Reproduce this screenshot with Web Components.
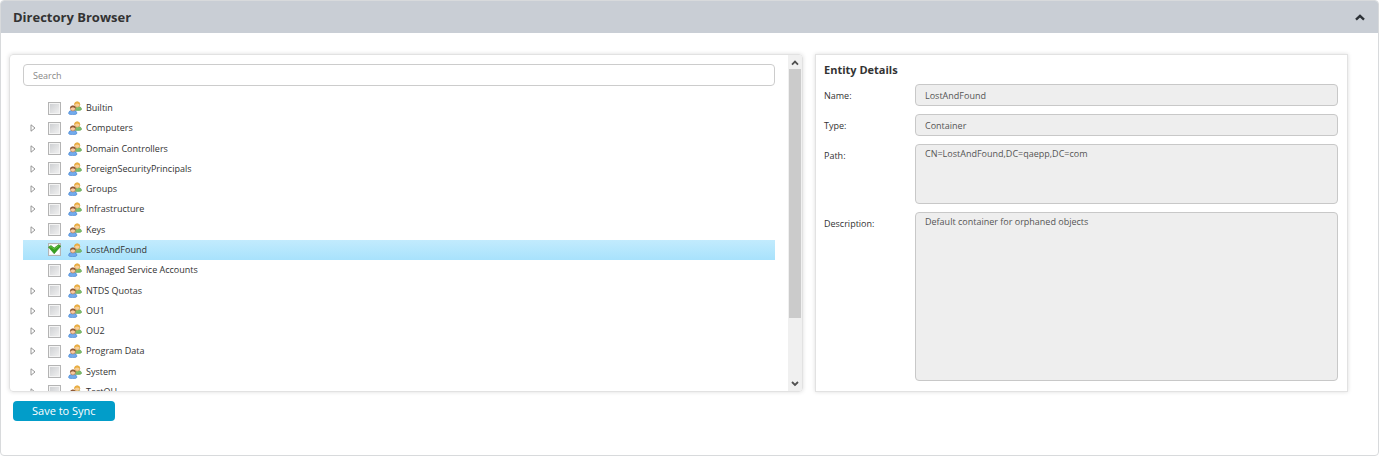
<!DOCTYPE html>
<html lang="en">
<head>
<meta charset="utf-8">
<title>Directory Browser</title>
<style>
  body {
    margin: 0;
    background: #fff;
    color: #333;
    font: 9px/16px "Open Sans", "Noto Sans", sans-serif;
  }
</style>
</head>
<body>
<collapse-panel heading="Directory Browser">
  <scroll-box>
    <directory-tree></directory-tree>
  </scroll-box>
  <entity-details heading="Entity Details">
    <detail-field label="Name" value="LostAndFound"></detail-field>
    <detail-field label="Type" value="Container"></detail-field>
    <detail-field label="Path" value="CN=LostAndFound,DC=qaepp,DC=com" size="medium"></detail-field>
    <detail-field label="Description" value="Default container for orphaned objects" size="large"></detail-field>
  </entity-details>
  <save-button slot="actions">Save to Sync</save-button>
</collapse-panel>

<script>
class BaseComponent extends HTMLElement {
  constructor() {
    super();
    this.attachShadow({ mode: 'open' });
  }

  connectedCallback() {
    this.render();
  }

  render(template) {
    this.shadowRoot.innerHTML = `
      <style>
        * { box-sizing: border-box; }
        button, input, textarea { margin: 0; font: inherit; color: inherit; }
      </style>
      ${template}
    `;
  }
}

class CollapsePanel extends BaseComponent {
  render() {
    super.render(`
      <style>
        :host {
          display: block;
          border: 1px solid #d8dadc;
          border-radius: 4px;
          overflow: hidden;
        }

        header {
          display: flex;
          align-items: center;
          justify-content: space-between;
          height: 32px;
          padding: 0 12px;
          background: #c9ced5;
        }

        h1 {
          margin: 0;
          font-size: 13px;
          font-weight: bold;
        }

        header button {
          display: flex;
          padding: 0;
          border: 0;
          background: none;
        }

        .columns {
          display: grid;
          grid-template-columns: 794fr 533fr;
          gap: 12px;
          padding: 21px 30px 0 8px;
        }

        footer {
          padding: 9px 12px 34px;
        }
      </style>

      <header>
        <h1>${this.getAttribute('heading')}</h1>
        <button aria-label="Collapse">
          <svg width="12" height="10" viewBox="0 0 12 10">
            <path d="M2 7.6 6 3.8 10 7.6" fill="none" stroke="#2c3136" stroke-width="2.4"/>
          </svg>
        </button>
      </header>
      <div class="columns"><slot></slot></div>
      <footer><slot name="actions"></slot></footer>
    `);
  }
}

class ScrollBox extends BaseComponent {
  render() {
    super.render(`
      <style>
        :host {
          display: flex;
          height: 338px;
          box-sizing: border-box;
          border: 1px solid #e2e2e2;
          border-radius: 4px;
          box-shadow: 0 0 4px #ddd;
          overflow: hidden;
        }

        .content {
          flex: 1;
          min-width: 0;
          padding: 9px 13px 0;
          overflow: hidden;
        }

        .bar {
          display: flex;
          flex-direction: column;
          align-items: center;
          width: 14px;
          background: #f0f0f0;
        }

        .bar svg {
          flex: none;
        }

        .track {
          flex: 1;
          width: 12px;
        }

        .thumb {
          height: 81%;
          background: #cbcbcb;
        }
      </style>

      <div class="content"><slot></slot></div>
      <div class="bar">
        <svg width="12" height="14" viewBox="0 0 12 14">
          <path d="M3 9.6 6 6.6 9 9.6" fill="none" stroke="#505050" stroke-width="1.8"/>
        </svg>
        <div class="track"><div class="thumb"></div></div>
        <svg width="12" height="14" viewBox="0 0 12 14">
          <path d="M3 5 6 8 9 5" fill="none" stroke="#505050" stroke-width="1.8"/>
        </svg>
      </div>
    `);
  }
}

class DirectoryTree extends BaseComponent {
  render() {
    super.render(`
      <style>
        :host {
          display: block;
        }

        input {
          display: block;
          width: 100%;
          height: 22px;
          padding: 0 9px;
          border: 1px solid #ccc;
          border-radius: 4px;
          background: #fff;
        }

        input::placeholder {
          color: #888;
          opacity: 1;
        }

        .rows {
          display: grid;
          grid-auto-rows: 1fr;
          height: 304px;
          margin-top: 12px;
        }
      </style>

      <input type="text" placeholder="Search" aria-label="Search">
      <div class="rows">
        <tree-row name="Builtin" leaf></tree-row>
        <tree-row name="Computers"></tree-row>
        <tree-row name="Domain Controllers"></tree-row>
        <tree-row name="ForeignSecurityPrincipals"></tree-row>
        <tree-row name="Groups"></tree-row>
        <tree-row name="Infrastructure"></tree-row>
        <tree-row name="Keys"></tree-row>
        <tree-row name="LostAndFound" leaf selected></tree-row>
        <tree-row name="Managed Service Accounts" leaf></tree-row>
        <tree-row name="NTDS Quotas"></tree-row>
        <tree-row name="OU1"></tree-row>
        <tree-row name="OU2"></tree-row>
        <tree-row name="Program Data"></tree-row>
        <tree-row name="System"></tree-row>
        <tree-row name="TestOU"></tree-row>
      </div>
    `);
  }
}

class TreeRow extends BaseComponent {
  render() {
    const expander = `
      <button aria-label="Expand">
        <svg width="6" height="8" viewBox="0 0 6 8">
          <path d="M1 .8 5 4 1 7.2Z" fill="#fff" stroke="#8c8c8c" stroke-width=".9"/>
        </svg>
      </button>
    `;

    super.render(`
      <style>
        :host {
          display: grid;
          grid-template-columns: 25px 1fr;
          align-items: center;
        }

        :host([selected]) {
          background: linear-gradient(#c2ebfd, #a8e2fc);
        }

        button {
          display: flex;
          justify-self: start;
          margin-left: 7px;
          padding: 0;
          border: 0;
          background: none;
        }

        label {
          display: flex;
          grid-column: 2;
          align-items: center;
        }

        .check {
          display: grid;
          margin-right: 7px;
        }

        input, .tick {
          grid-area: 1 / 1;
        }

        input {
          appearance: none;
          width: 13px;
          height: 13px;
          border: 1px solid #b4b4b4;
          box-shadow: inset 0 0 0 1px #f4f4f4;
          background: linear-gradient(135deg, #cbcdd0, #f3f3f3);
        }

        .tick {
          display: none;
          pointer-events: none;
        }

        input:checked {
          background: #fff;
        }

        input:checked + .tick {
          display: block;
        }

        .people {
          margin-right: 4px;
        }
      </style>

      ${this.hasAttribute('leaf') ? '' : expander}
      <label>
        <span class="check">
          <input type="checkbox" ${this.hasAttribute('selected') ? 'checked' : ''}>
          <svg class="tick" width="13" height="13" viewBox="0 0 13 13">
            <path d="M.4 4 3 2.6 6.2 5 10.8 1.6 12.8 3.2 6.2 10.8Z" fill="#35a022" stroke="#2b8a1c" stroke-width=".6"/>
            <path d="M1.8 4.3 3.1 3.7 6.2 6.1 10.8 2.7" fill="none" stroke="#74cc50" stroke-width=".8"/>
          </svg>
        </span>
        <svg class="people" width="14" height="14" viewBox="0 0 14 14">
          <path d="M5.8 9.2Q5.8 5.8 9.4 5.4 13.5 5.6 13.5 8.4 13.3 9.4 9.6 9.4Z" fill="#80bd6c" stroke="#569a4a" stroke-width=".6"/>
          <circle cx="9.2" cy="3.6" r="2.6" fill="#f8cf98" stroke="#d39a45" stroke-width=".6"/>
          <path d="M6.3 4Q6 .5 9.2.5 12.4.5 12.1 4 10.8 2.4 9.1 2.4 7.4 2.5 6.3 4Z" fill="#e9ae42"/>
          <path d="M.5 12.4Q.7 9.4 4.6 9.3 8.8 9.4 8.9 12.4 8.6 13.6 4.7 13.6.8 13.6.5 12.4Z" fill="#72abed" stroke="#3f7fcf" stroke-width=".6"/>
          <circle cx="4.9" cy="7.5" r="2.5" fill="#f9c9a2" stroke="#b0764c" stroke-width=".6"/>
          <path d="M2.1 7.8Q1.8 4.6 4.9 4.5 8 4.6 7.7 7.8 6.5 6.3 4.9 6.3 3.2 6.3 2.1 7.8Z" fill="#905a38"/>
        </svg>
        ${this.getAttribute('name')}
      </label>
    `);
  }
}

class EntityDetails extends BaseComponent {
  render() {
    super.render(`
      <style>
        :host {
          display: flex;
          flex-direction: column;
          gap: 8px;
          box-sizing: border-box;
          padding: 7px 9px 10px 8px;
          border: 1px solid #e2e2e2;
          box-shadow: 0 0 4px #ddd;
        }

        h2 {
          margin: 0 0 -2px;
          font-size: 11px;
          font-weight: bold;
        }
      </style>

      <h2>${this.getAttribute('heading')}</h2>
      <slot></slot>
    `);
  }
}

class DetailField extends BaseComponent {
  render() {
    const value = this.getAttribute('value');
    const control = this.hasAttribute('size')
      ? `<textarea id="control" readonly>${value}</textarea>`
      : `<input id="control" type="text" value="${value}" readonly>`;

    super.render(`
      <style>
        :host {
          display: grid;
          grid-template-columns: 91px 1fr;
          height: 22px;
        }

        :host([size="medium"]) {
          height: 60px;
        }

        :host([size="large"]) {
          flex: 1;
        }

        label {
          padding-top: 4px;
        }

        input, textarea {
          width: 100%;
          height: 100%;
          padding: 0 9px;
          border: 1px solid #c8c8c8;
          border-radius: 4px;
          background: #eee;
          color: #555;
          resize: none;
        }

        textarea {
          padding-top: 1px;
        }
      </style>

      <label for="control">${this.getAttribute('label')}:</label>
      ${control}
    `);
  }
}

class SaveButton extends BaseComponent {
  render() {
    super.render(`
      <style>
        :host {
          display: block;
        }

        button {
          display: block;
          height: 20px;
          padding: 0 19px;
          border: 0;
          border-radius: 4px;
          background: #029dc9;
          color: #fff;
          font-size: 11px;
        }
      </style>

      <button type="button"><slot></slot></button>
    `);
  }
}

window.customElements.define('collapse-panel', CollapsePanel);
window.customElements.define('scroll-box', ScrollBox);
window.customElements.define('directory-tree', DirectoryTree);
window.customElements.define('tree-row', TreeRow);
window.customElements.define('entity-details', EntityDetails);
window.customElements.define('detail-field', DetailField);
window.customElements.define('save-button', SaveButton);
</script>
</body>
</html>
